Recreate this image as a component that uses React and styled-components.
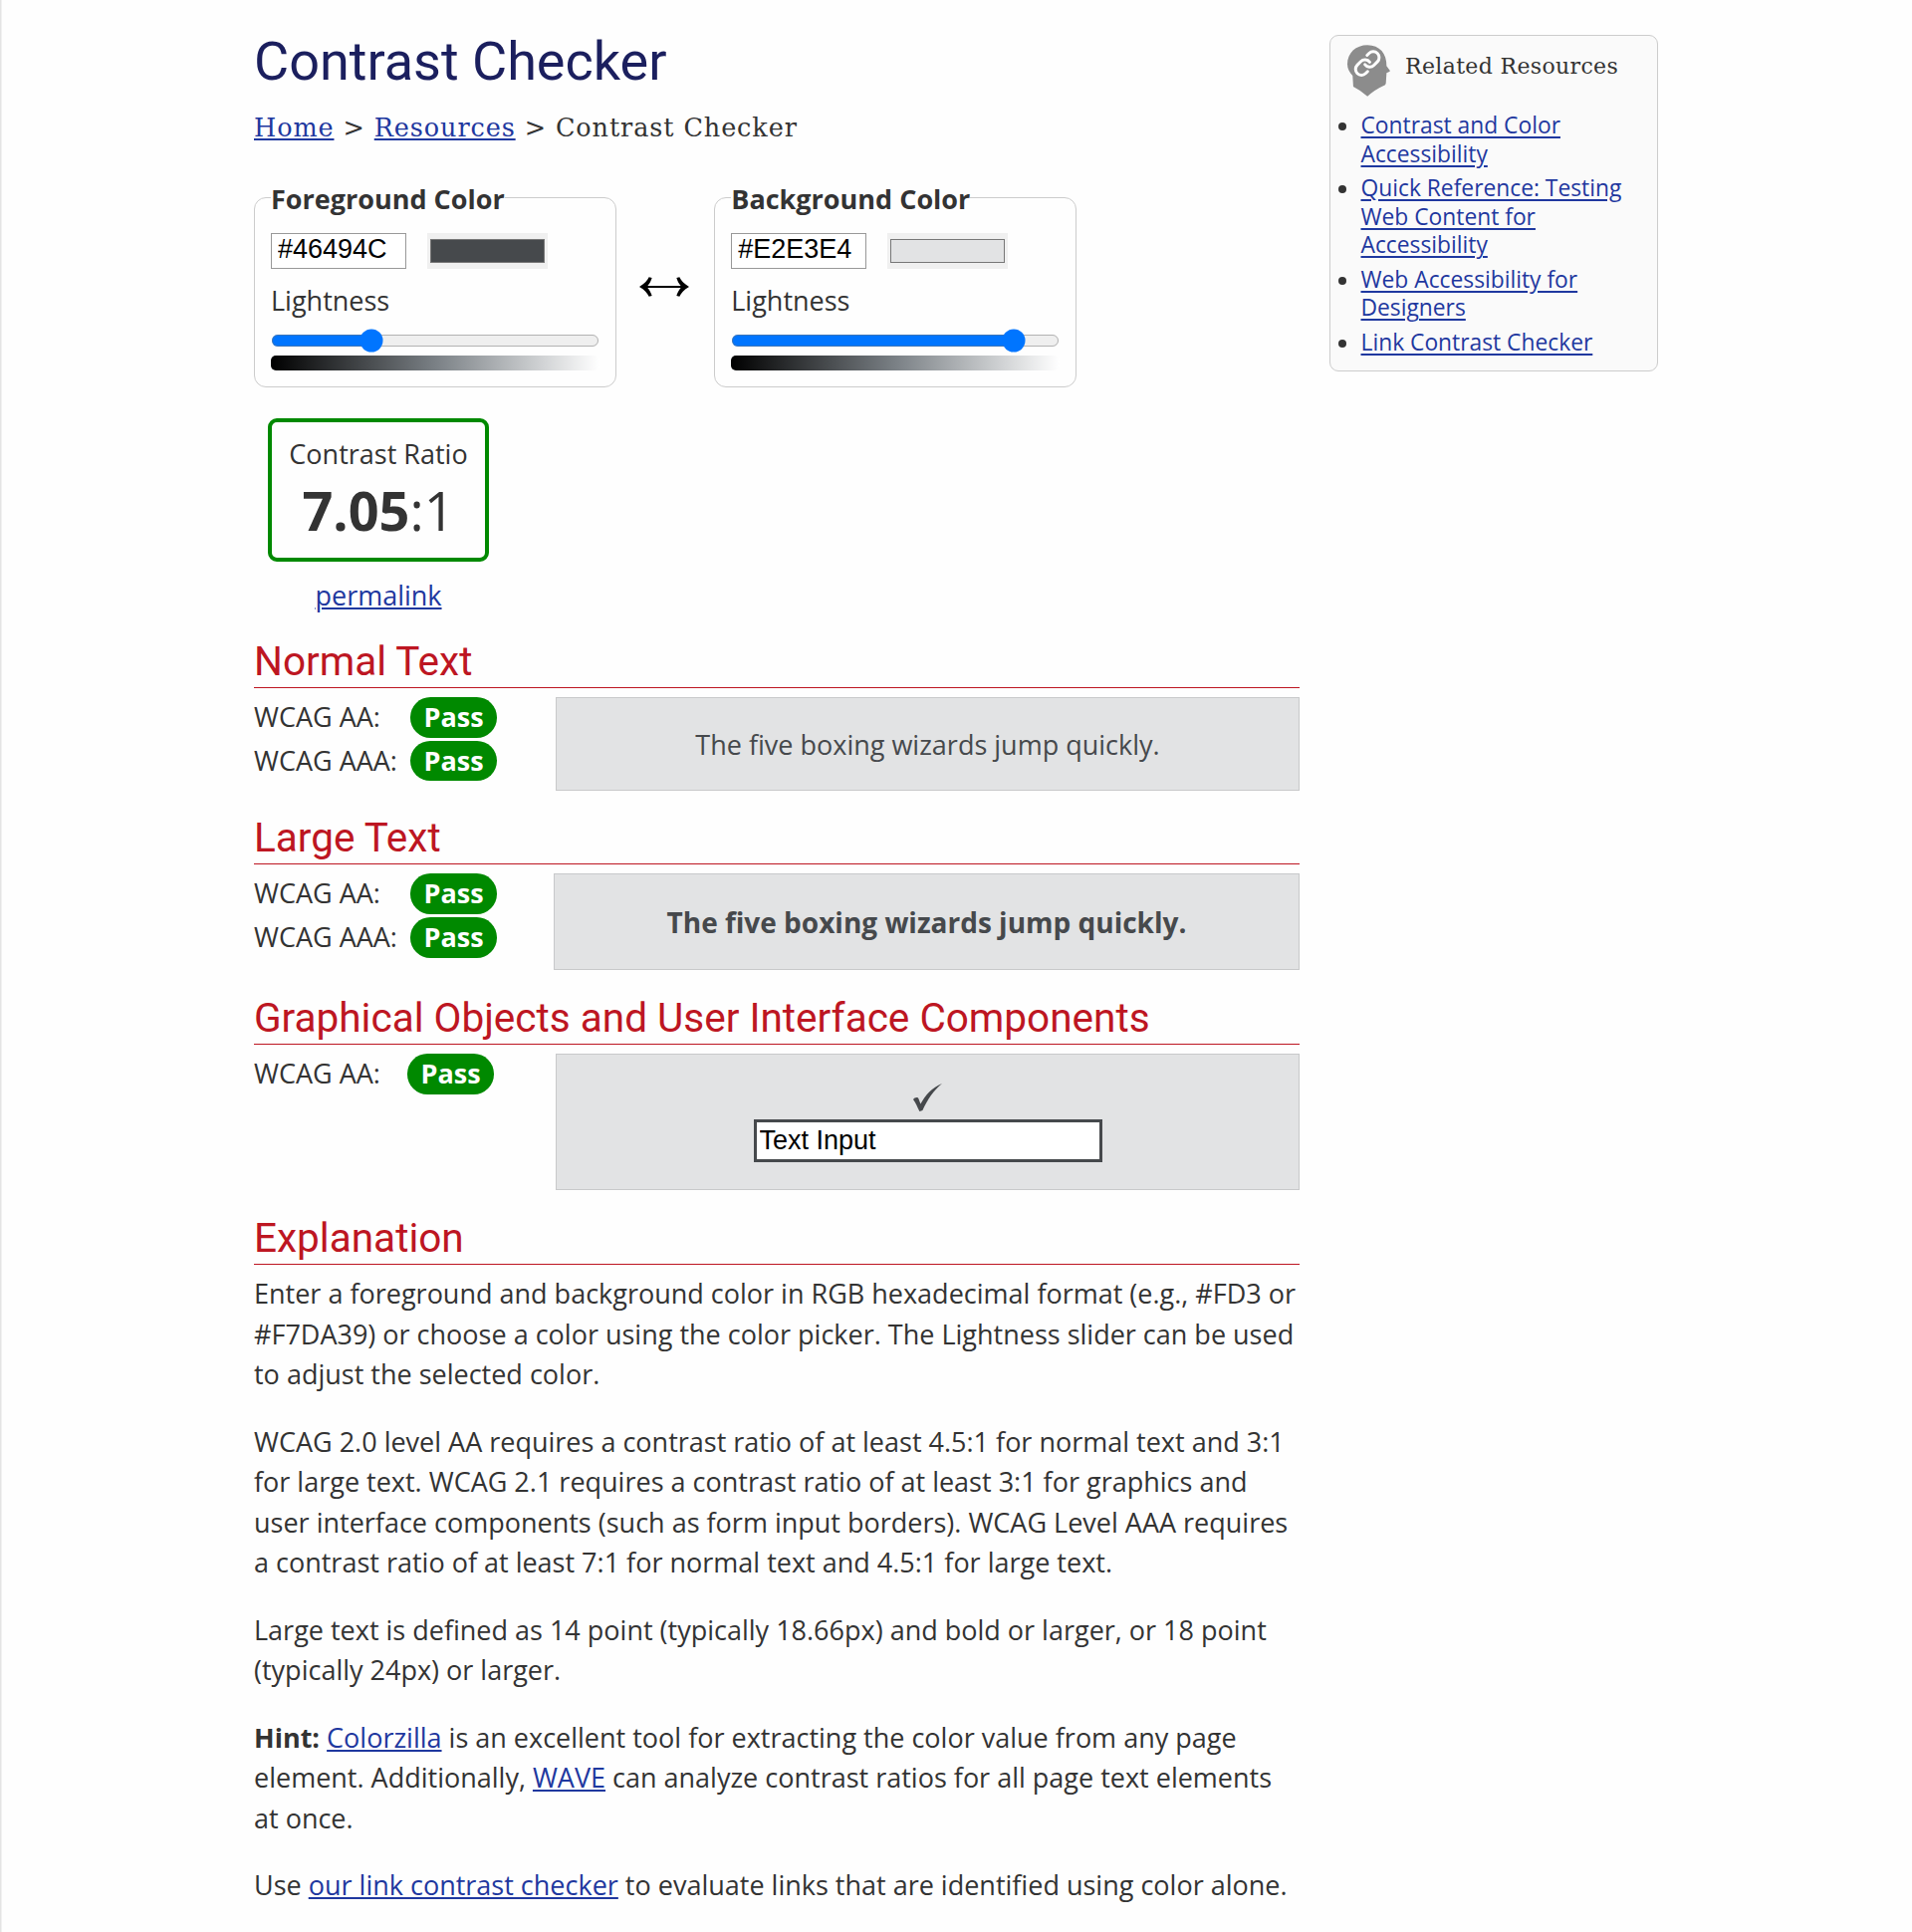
import React, { useState } from "react";
import styled, { createGlobalStyle } from "styled-components";

const sans = `"Open Sans", "Liberation Sans", sans-serif`;
const heading = `Roboto, "Liberation Sans", sans-serif`;
const slab = `"DejaVu Serif", "Liberation Serif", serif`;

const GlobalStyle = createGlobalStyle`
  *, *::before, *::after { box-sizing: border-box; }
  body {
    margin: 0;
    color: #333;
    font: 27px/40.5px ${sans};
    background: #fefefe;
  }
`;

const Page = styled.div`
  min-height: 1940px;
  background: linear-gradient(to right, #e4e4e4 1px, #f1f1f1 1px, #f1f1f1 2px, transparent 2px);
`;

const Columns = styled.div`
  display: grid;
  grid-template-columns: 1050px 330px;
  column-gap: 30px;
  align-items: start;
  width: 1410px;
  margin: 0 auto;
`;

const Main = styled.main`
  padding-top: 31.5px;
`;

const Title = styled.h1`
  margin: 0;
  color: #1b1f5e;
  font: 400 54px/60px ${heading};
`;

const Link = styled.a`
  color: #1f389f;
  text-decoration: underline;
  text-decoration-thickness: 2px;
  text-underline-offset: ${(p) => p.$offset || 2}px;
`;

const Breadcrumb = styled.nav`
  margin-top: 16px;
  font: 25.5px/40px ${slab};
  letter-spacing: 0.9px;
`;

const Pickers = styled.div`
  display: flex;
  align-items: flex-start;
  margin-top: 29.5px;
`;

const Picker = styled.fieldset`
  width: 363.6px;
  height: 211.5px;
  margin: 0;
  padding: 13.8px 16px 0;
  border: 1px solid #ccc;
  border-radius: 12px;
`;

const Legend = styled.legend`
  padding: 2.7px 0 0;
  font-weight: 700;
`;

const PickerRow = styled.div`
  display: flex;
  gap: 21px;
`;

const HexInput = styled.input`
  width: 136px;
  height: 36px;
  padding: 0 0 3px 6px;
  border: 1px solid #999;
  border-radius: 0;
  background: #fff;
  color: #000;
  font: 27px "Liberation Sans", sans-serif;
`;

const ColorInput = styled.input`
  zoom: 1.5;
  width: 80.67px;
  height: 24px;
  padding: 0;
  border: 0;
  background: #f0f0f0;
`;

const SliderLabel = styled.label`
  display: block;
  margin-top: 12px;
`;

const Slider = styled.input`
  zoom: 1.5;
  display: block;
  width: 219.73px;
  height: 16px;
  margin: 4.73px 0 0;
`;

const LightnessScale = styled.div`
  height: 15px;
  margin-top: 3px;
  border-radius: 5px;
  background: linear-gradient(to right, #000, #7a8085, #fff);
`;

const SwapButton = styled.button`
  display: flex;
  justify-content: center;
  width: 98.7px;
  margin-top: 100.5px;
  padding: 0 2px 0 0;
  border: 0;
  background: none;
  color: #000;
`;

const RatioGroup = styled.div`
  width: 222px;
  margin: 31.5px 0 0 14px;
  text-align: center;
`;

const RatioBox = styled.div`
  height: 144px;
  padding-top: 12px;
  border: 4px solid #008900;
  border-radius: 9px;
`;

const RatioValue = styled.div`
  font-size: 54px;
  line-height: 70px;
`;

const Permalink = styled.div`
  margin-top: 13.5px;
`;

const SectionTitle = styled.h2`
  margin: ${(p) => p.$top}px 0 9px;
  padding-bottom: 2px;
  border-bottom: 1px solid #bd1622;
  color: #bd1622;
  font: 400 40.5px/48px ${heading};
`;

const ResultRow = styled.div`
  display: flex;
  justify-content: space-between;
  align-items: flex-start;
`;

const Results = styled.div`
  display: grid;
  grid-template-columns: ${(p) => p.$label}px auto;
  row-gap: ${(p) => p.$gap || 3}px;
`;

const Pass = styled.strong`
  padding: 0 13.5px;
  border-radius: 20.25px;
  background: #008900;
  color: #fff;
`;

const Sample = styled.div`
  display: flex;
  flex-direction: column;
  align-items: center;
  justify-content: center;
  width: ${(p) => p.$width}px;
  height: ${(p) => p.$height}px;
  padding-top: 2px;
  border: 1px solid #c8c9ca;
  background: #e2e3e4;
  color: #46494c;
  font-size: ${(p) => p.$size || 27}px;
  font-weight: ${(p) => (p.$bold ? 700 : 400)};
`;

const SampleInput = styled.input`
  width: 350px;
  height: 43px;
  margin-top: 8px;
  padding: 0 3px 1px;
  border: 3px solid #46494c;
  background: #fff;
  color: #000;
  font: 27px "Liberation Sans", sans-serif;
`;

const Explanation = styled.div`
  padding-top: 0.4px;
`;

const Paragraph = styled.p`
  margin: 0 0 27px;
`;

const Sidebar = styled.aside`
  height: 338px;
  margin-top: 35px;
  padding: 9px 10px 0 8px;
  border: 1px solid #ccc;
  border-radius: 9px;
  background: #fafafa;
`;

const SidebarTitle = styled.div`
  display: flex;
  align-items: center;
  gap: 15px;
  padding-left: 9px;
  font: 22px/30px ${slab};
  letter-spacing: 0.35px;
`;

const SidebarText = styled.span`
  padding-bottom: 8px;
`;

const ResourceList = styled.ul`
  display: grid;
  gap: 5.7px;
  margin: 14.8px 0 0;
  padding: 0;
  list-style: none;
  font-size: 22.8px;
  line-height: 28.7px;
`;

const Resource = styled.li`
  display: flex;
  gap: 14.5px;

  &::before {
    content: "";
    flex: none;
    width: 8px;
    height: 8px;
    margin-top: 11px;
    border-radius: 50%;
    background: #333;
  }
`;

const SwapIcon = () => (
  <svg width="50" height="20" viewBox="22 37 150 60" fill="currentColor">
    <path d="M22 67C38 58 46 48 51 38L60 40C57 50 53 57 47 64.2H147C141 57 137 50 134 40L143 38C148 48 156 58 172 67C156 76 148 86 143 96L134 94C137 84 141 77 147 69.8H47C53 77 57 84 60 94L51 96C46 86 38 76 22 67Z" />
  </svg>
);

const CheckIcon = () => (
  <svg width="29" height="28" viewBox="0 0 29 28" fill="currentColor">
    <path d="M0 16C1.2 14.2 4.4 13.2 5.4 15.2C6.2 17 6.8 18.8 7.4 20.6C12 12 19 4 29 0C20.4 7 14.4 16 9.4 27L6.4 28C4.4 24 2.6 19.4 0 16Z" />
  </svg>
);

const HeadIcon = () => (
  <svg width="43" height="52" viewBox="24 26 130 156">
    <path
      fill="#8c8c8c"
      d="M85 26C50 26 24 50 24 84C24 98 31 108 40 119L42 152Q66 164 85 182Q106 162 139 147L141 142L143 111L153 106V103L143 90C144 52 122 26 85 26Z"
    />
    <g transform="translate(41.5 38.5) scale(3.6)" fill="none" stroke="#fff" strokeWidth="2.5" strokeLinecap="round">
      <path d="M10 13a5 5 0 0 0 7.54.54l3-3a5 5 0 0 0-7.07-7.07l-1.72 1.71" />
      <path d="M14 11a5 5 0 0 0-7.54-.54l-3 3a5 5 0 0 0 7.07 7.07l1.71-1.71" />
    </g>
  </svg>
);

function ColorPicker({ label, hex, lightness }) {
  const [color, setColor] = useState(hex);
  const [level, setLevel] = useState(lightness);
  return (
    <Picker>
      <Legend>{label}</Legend>
      <PickerRow>
        <HexInput value={color} onChange={(e) => setColor(e.target.value)} />
        <ColorInput type="color" value={color.toLowerCase()} onChange={(e) => setColor(e.target.value.toUpperCase())} />
      </PickerRow>
      <SliderLabel>Lightness</SliderLabel>
      <Slider type="range" min="0" max="100" value={level} onChange={(e) => setLevel(e.target.value)} />
      <LightnessScale />
    </Picker>
  );
}

const resources = [
  "Contrast and Color Accessibility",
  "Quick Reference: Testing Web Content for Accessibility",
  "Web Accessibility for Designers",
  "Link Contrast Checker",
];

export default function App() {
  return (
    <Page>
      <GlobalStyle />
      <Columns>
        <Main>
          <Title>Contrast Checker</Title>
          <Breadcrumb>
            <Link href="#">Home</Link> &gt; <Link href="#">Resources</Link> &gt; Contrast Checker
          </Breadcrumb>

          <Pickers>
            <ColorPicker label="Foreground Color" hex="#46494C" lightness={29} />
            <SwapButton aria-label="Swap colors">
              <SwapIcon />
            </SwapButton>
            <ColorPicker label="Background Color" hex="#E2E3E4" lightness={89} />
          </Pickers>

          <RatioGroup>
            <RatioBox>
              <div>Contrast Ratio</div>
              <RatioValue>
                <b>7.05</b>:1
              </RatioValue>
            </RatioBox>
            <Permalink>
              <Link href="#">permalink</Link>
            </Permalink>
          </RatioGroup>

          <SectionTitle $top={22}>Normal Text</SectionTitle>
          <ResultRow>
            <Results $label={157}>
              <span>WCAG AA:</span>
              <Pass>Pass</Pass>
              <span>WCAG AAA:</span>
              <Pass>Pass</Pass>
            </Results>
            <Sample $width={747} $height={94}>The five boxing wizards jump quickly.</Sample>
          </ResultRow>

          <SectionTitle $top={23}>Large Text</SectionTitle>
          <ResultRow>
            <Results $label={157} $gap={3.7}>
              <span>WCAG AA:</span>
              <Pass>Pass</Pass>
              <span>WCAG AAA:</span>
              <Pass>Pass</Pass>
            </Results>
            <Sample $width={749} $height={97} $size={28} $bold>The five boxing wizards jump quickly.</Sample>
          </ResultRow>

          <SectionTitle $top={24}>Graphical Objects and User Interface Components</SectionTitle>
          <ResultRow>
            <Results $label={154}>
              <span>WCAG AA:</span>
              <Pass>Pass</Pass>
            </Results>
            <Sample $width={747} $height={137}>
              <CheckIcon />
              <SampleInput defaultValue="Text Input" />
            </Sample>
          </ResultRow>

          <SectionTitle $top={24}>Explanation</SectionTitle>
          <Explanation>
            <Paragraph>
              Enter a foreground and background color in RGB hexadecimal format (e.g., #FD3 or #F7DA39) or choose a
              color using the color picker. The Lightness slider can be used to adjust the selected color.
            </Paragraph>
            <Paragraph>
              WCAG 2.0 level AA requires a contrast ratio of at least 4.5:1 for normal text and 3:1 for large text. WCAG
              2.1 requires a contrast ratio of at least 3:1 for graphics and user interface components (such as form
              input borders). WCAG Level AAA requires a contrast ratio of at least 7:1 for normal text and 4.5:1 for
              large text.
            </Paragraph>
            <Paragraph>
              Large text is defined as 14 point (typically 18.66px) and bold or larger, or 18 point (typically 24px) or
              larger.
            </Paragraph>
            <Paragraph>
              <b>Hint:</b> <Link href="#">Colorzilla</Link> is an excellent tool for extracting the color value from any
              page element. Additionally, <Link href="#">WAVE</Link> can analyze contrast ratios for all page text
              elements at once.
            </Paragraph>
            <Paragraph>
              Use <Link href="#">our link contrast checker</Link> to evaluate links that are identified using color
              alone.
            </Paragraph>
          </Explanation>
        </Main>

        <Sidebar>
          <SidebarTitle>
            <HeadIcon />
            <SidebarText>Related Resources</SidebarText>
          </SidebarTitle>
          <ResourceList>
            {resources.map((name) => (
              <Resource key={name}>
                <div>
                  <Link href="#" $offset={3}>{name}</Link>
                </div>
              </Resource>
            ))}
          </ResourceList>
        </Sidebar>
      </Columns>
    </Page>
  );
}
